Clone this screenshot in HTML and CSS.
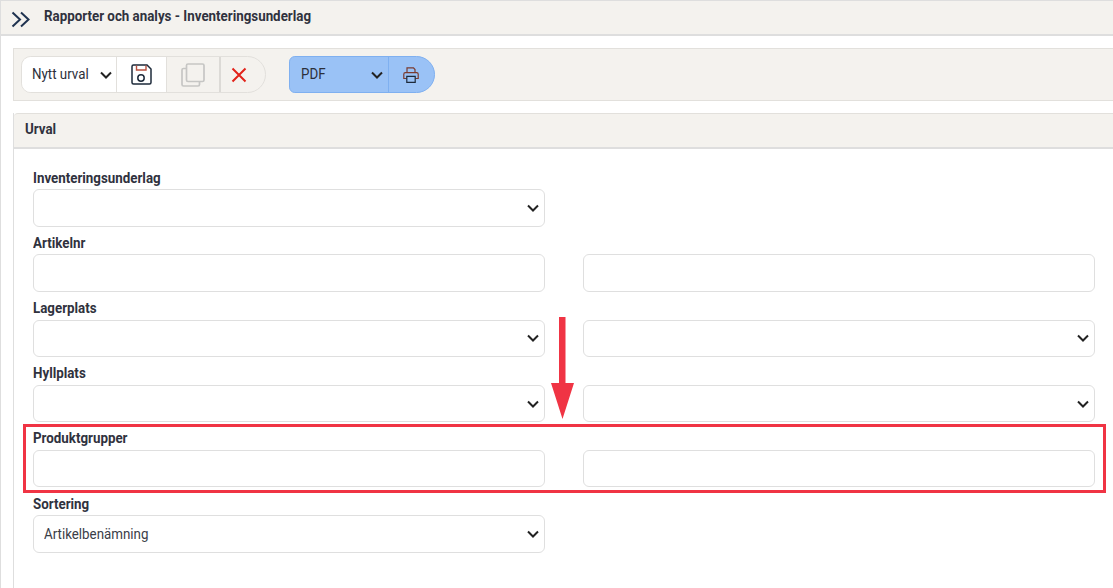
FILE: index.html
```html
<!DOCTYPE html>
<html lang="sv">
<head>
<meta charset="utf-8">
<title>Inventeringsunderlag</title>
<link rel="stylesheet" href="styles.css">
</head>
<body>
<div class="page">
  <header class="topbar">
    <svg class="menu-icon" width="20" height="17" viewBox="0 0 20 17"><path d="M1.500 1.500 9 8.500 1.500 15.500M10 1.500 17.500 8.500 10 15.500" fill="none" stroke="#1f3350" stroke-width="2"/></svg>
    <h1>Rapporter och analys - Inventeringsunderlag</h1>
  </header>
  <main class="content">
    <div class="toolbar">
      <div class="group">
        <div class="seg seg-select"><span class="narrow">Nytt urval</span><svg class="chev" width="12" height="8" viewBox="0 0 12 8"><path d="M1 1.500 6 6.500l5-5" fill="none" stroke="#222" stroke-width="2"/></svg></div>
        <div class="seg seg-save"><svg width="21" height="21" viewBox="0 0 21 21"><path d="M2.500 1h13.500l4 4v13.500a1.500 1.500 0 0 1-1.500 1.500h-16A1.500 1.500 0 0 1 1 18.500v-16A1.500 1.500 0 0 1 2.500 1z" fill="none" stroke="#1d2a3a" stroke-width="1.500"/><path d="M5.500 1.500v4.500h9.500V1.500" fill="none" stroke="#b8503f" stroke-width="1.400"/><circle cx="10" cy="14" r="3.200" fill="none" stroke="#1d2a3a" stroke-width="1.500"/></svg></div>
        <div class="seg seg-copy"><svg width="24" height="24" viewBox="0 0 24 24"><rect x="5.500" y="1" width="17.500" height="17.500" rx="1.500" fill="none" stroke="#c6c6c4" stroke-width="1.700"/><path d="M5 5.500H2.500A1.500 1.500 0 0 0 1 7v14.500A1.500 1.500 0 0 0 2.500 23H17a1.500 1.500 0 0 0 1.500-1.500V18.500" fill="none" stroke="#c6c6c4" stroke-width="1.700"/></svg></div>
        <div class="seg seg-del"><svg width="16" height="16" viewBox="0 0 16 16"><path d="M1.500 1.500l13 13M14.500 1.500l-13 13" fill="none" stroke="#e2231a" stroke-width="2"/></svg></div>
      </div>
      <div class="pdf">
        <div class="pdf-select"><span class="narrow">PDF</span><svg class="chev" width="12" height="8" viewBox="0 0 12 8"><path d="M1 1.500 6 6.500l5-5" fill="none" stroke="#222" stroke-width="2"/></svg></div>
        <div class="pdf-print"><svg width="16" height="16" viewBox="0 0 16 16"><path d="M4 5.500V.8h6.500L12 2.500v3M3.500 11.500H.8V7.200A1.500 1.500 0 0 1 2.300 5.700h11.400a1.500 1.500 0 0 1 1.500 1.500v4.300h-2.700" fill="none" stroke="#7a3b30" stroke-width="1.200"/><path d="M3.800 9.300h8.400v6H3.800z" fill="none" stroke="#1d2a3a" stroke-width="1.200"/></svg></div>
      </div>
    </div>
    <section class="panel">
      <div class="panel-head"><span class="narrow">Urval</span></div>
      <div class="form">
        <div class="row">
          <label>Inventeringsunderlag</label>
          <div class="cols">
            <div class="field select"><svg class="chev" width="12" height="8" viewBox="0 0 12 8"><path d="M1 1.500 6 6.500l5-5" fill="none" stroke="#222" stroke-width="2"/></svg></div>
          </div>
        </div>
        <div class="row">
          <label>Artikelnr</label>
          <div class="cols">
            <div class="field"></div>
            <div class="field"></div>
          </div>
        </div>
        <div class="row">
          <label>Lagerplats</label>
          <div class="cols">
            <div class="field select"><svg class="chev" width="12" height="8" viewBox="0 0 12 8"><path d="M1 1.500 6 6.500l5-5" fill="none" stroke="#222" stroke-width="2"/></svg></div>
            <div class="field select"><svg class="chev" width="12" height="8" viewBox="0 0 12 8"><path d="M1 1.500 6 6.500l5-5" fill="none" stroke="#222" stroke-width="2"/></svg></div>
          </div>
        </div>
        <div class="row">
          <label>Hyllplats</label>
          <div class="cols">
            <div class="field select"><svg class="chev" width="12" height="8" viewBox="0 0 12 8"><path d="M1 1.500 6 6.500l5-5" fill="none" stroke="#222" stroke-width="2"/></svg></div>
            <div class="field select"><svg class="chev" width="12" height="8" viewBox="0 0 12 8"><path d="M1 1.500 6 6.500l5-5" fill="none" stroke="#222" stroke-width="2"/></svg></div>
          </div>
        </div>
        <div class="row">
          <label>Produktgrupper</label>
          <div class="cols">
            <div class="field"></div>
            <div class="field"></div>
          </div>
        </div>
        <div class="row">
          <label>Sortering</label>
          <div class="cols">
            <div class="field select"><span class="narrow">Artikelbenämning</span><svg class="chev" width="12" height="8" viewBox="0 0 12 8"><path d="M1 1.500 6 6.500l5-5" fill="none" stroke="#222" stroke-width="2"/></svg></div>
          </div>
        </div>
      </div>
    </section>
  </main>
  <div class="highlight"></div>
  <svg class="arrow" width="23" height="102" viewBox="0 0 23 102"><path d="M8 0h6.500v66H23L11.500 102 0 66h8z" fill="#f03444"/></svg>
</div>
</body>
</html>
```
FILE: styles.css
```css
* { box-sizing: border-box; }
html, body { margin: 0; padding: 0; height: 100%; background: #fff; overflow: hidden; }
body { font-family: Roboto, "Liberation Sans", sans-serif; color: #2c2f3a; }
.page { position: relative; width: 1113px; height: 588px; overflow: hidden; border-left: 1px solid #dedede; }
.narrow { display: inline-block; transform: scaleX(0.92); transform-origin: left center; white-space: nowrap; }
.topbar {
  height: 36px;
  background: #f4f2ee;
  border-top: 1px solid #dedede;
  border-bottom: 2px solid #dedede;
  display: flex;
  align-items: center;
  padding-left: 10px;
}
.menu-icon { margin-top: 3px; flex: none; }
.topbar h1 { margin: 0 0 2px 13px; font-size: 14.500px; font-weight: 700; color: #30323e; transform: scaleX(0.92); transform-origin: left center; white-space: nowrap; }
.content { padding: 12px 0 0 12px; }
.toolbar {
  height: 53px;
  background: #f4f2ee;
  border: 1px solid #e2e0dc;
  border-right: 0;
  padding: 7px 0 0 7px;
  display: flex;
  gap: 23px;
}
.group {
  width: 245px;
  height: 37px;
  display: flex;
  border: 1px solid #e2e0dc;
  border-radius: 10px 19px 19px 10px;
  overflow: hidden;
}
.seg { display: flex; align-items: center; justify-content: center; height: 100%; font-size: 14.500px; color: #2c2f3a; }
.seg-select { width: 95px; background: #fff; justify-content: space-between; padding: 0 4px 0 10px; border-right: 1px solid #e2e0dc; }
.seg-select .narrow { margin-right: -6px; }
.seg-save { width: 50px; background: #fff; border-right: 1px solid #e2e0dc; }
.seg-copy { width: 54px; border-right: 2px solid #dcdad6; }
.seg-del { flex: 1; padding-right: 8px; }
.pdf {
  width: 146px;
  height: 37px;
  display: flex;
  background: #9ac2f6;
  border: 1px solid #7fb0f0;
  border-radius: 6px 19px 19px 6px;
}
.pdf-select { width: 99px; display: flex; align-items: center; justify-content: space-between; padding: 0 5px 0 11px; font-size: 14.500px; border-right: 1px solid #7fb0f0; color: #2c2f3a; }
.pdf-print { flex: 1; display: flex; align-items: center; justify-content: center; padding-right: 2px; }
.panel { margin-top: 12px; min-height: 480px; border-left: 1px solid #dedede; }
.panel-head {
  height: 36px;
  background: #f4f2ee;
  border-top: 1px solid #e2e0dc;
  border-bottom: 2px solid #dedede;
  border-radius: 4px 0 0 0;
  padding-left: 11px;
  display: flex;
  align-items: center;
  font-size: 14.500px;
  font-weight: 700;
  color: #30323e;
  padding-bottom: 3px;
}
.form { padding: 19.200px 0 0 19px; display: flex; flex-direction: column; }
.row { height: 65.200px; }
.row label { display: block; height: 21px; padding-top: 0.450px; font-size: 14.500px; line-height: 19px; font-weight: 700; color: #30323e; transform: scaleX(0.92); transform-origin: left center; white-space: nowrap; }
.cols { display: flex; gap: 38px; }
.field {
  width: 512px;
  height: 37.500px;
  border: 1px solid #dfdfdf;
  border-radius: 6px;
  background: #fff;
  flex: none;
}
.select { display: flex; align-items: center; justify-content: flex-end; padding: 0 5px 0 10px; font-size: 14.500px; color: #3a3d48; }
.select .narrow { margin-right: auto; padding-top: 1px; }
.chev { flex: none; }
.highlight { position: absolute; left: 22px; top: 424px; width: 1083px; height: 69px; border: 3px solid #f03444; }
.arrow { position: absolute; left: 550px; top: 317px; }
```
